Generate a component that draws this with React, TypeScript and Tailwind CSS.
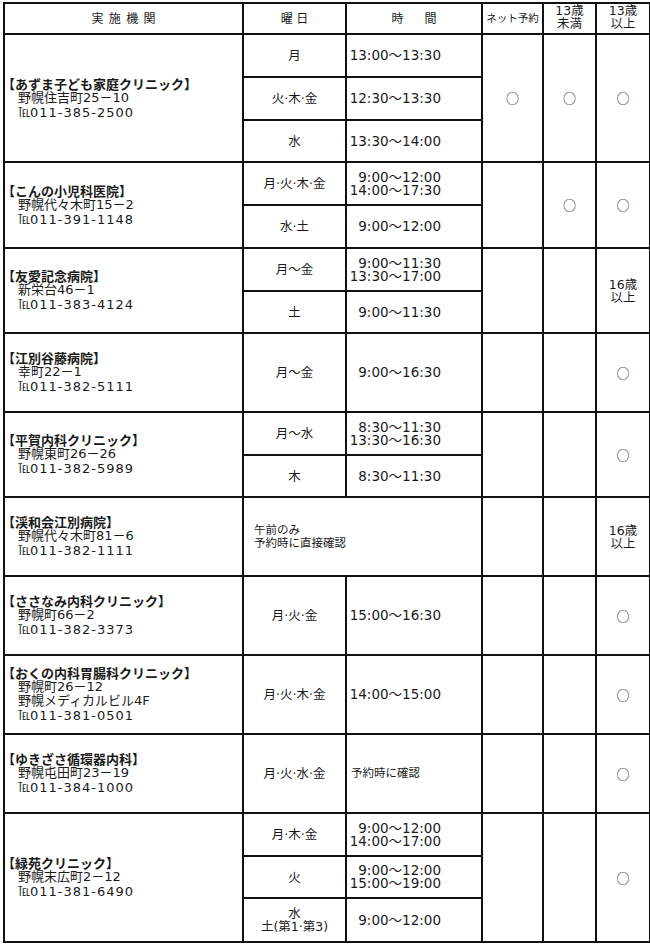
import { FC } from "react";

type Sub = {
  h: string;
  day?: string[];
  time?: string[];
  note?: string;
  span?: string[];
};

type Row = {
  name: string;
  addr: string[];
  tel: string;
  net?: boolean;
  u13?: boolean;
  o13?: "o" | "16";
  subs: Sub[];
};

const rows: Row[] = [
  {
    name: "【あずま子ども家庭クリニック】",
    addr: ["野幌住吉町25－10"],
    tel: "011-385-2500",
    net: true,
    u13: true,
    o13: "o",
    subs: [
      { h: "h-[43px]", day: ["月"], time: ["13:00～13:30"] },
      { h: "h-[43px]", day: ["火·木·金"], time: ["12:30～13:30"] },
      { h: "h-[42px]", day: ["水"], time: ["13:30～14:00"] },
    ],
  },
  {
    name: "【こんの小児科医院】",
    addr: ["野幌代々木町15－2"],
    tel: "011-391-1148",
    u13: true,
    o13: "o",
    subs: [
      { h: "h-[43px]", day: ["月·火·木·金"], time: ["9:00～12:00", "14:00～17:30"] },
      { h: "h-[43px]", day: ["水·土"], time: ["9:00～12:00"] },
    ],
  },
  {
    name: "【友愛記念病院】",
    addr: ["新栄台46－1"],
    tel: "011-383-4124",
    o13: "16",
    subs: [
      { h: "h-[43px]", day: ["月～金"], time: ["9:00～11:30", "13:30～17:00"] },
      { h: "h-[42px]", day: ["土"], time: ["9:00～11:30"] },
    ],
  },
  {
    name: "【江別谷藤病院】",
    addr: ["幸町22－1"],
    tel: "011-382-5111",
    o13: "o",
    subs: [{ h: "h-[79px]", day: ["月～金"], time: ["9:00～16:30"] }],
  },
  {
    name: "【平賀内科クリニック】",
    addr: ["野幌東町26－26"],
    tel: "011-382-5989",
    o13: "o",
    subs: [
      { h: "h-[43px]", day: ["月～水"], time: ["8:30～11:30", "13:30～16:30"] },
      { h: "h-[42px]", day: ["木"], time: ["8:30～11:30"] },
    ],
  },
  {
    name: "【渓和会江別病院】",
    addr: ["野幌代々木町81－6"],
    tel: "011-382-1111",
    o13: "16",
    subs: [{ h: "h-[79px]", span: ["午前のみ", "予約時に直接確認"] }],
  },
  {
    name: "【ささなみ内科クリニック】",
    addr: ["野幌町66－2"],
    tel: "011-382-3373",
    o13: "o",
    subs: [{ h: "h-[79px]", day: ["月·火·金"], time: ["15:00～16:30"] }],
  },
  {
    name: "【おくの内科胃腸科クリニック】",
    addr: ["野幌町26－12", "野幌メディカルビル4F"],
    tel: "011-381-0501",
    o13: "o",
    subs: [{ h: "h-[79px]", day: ["月·火·木·金"], time: ["14:00～15:00"] }],
  },
  {
    name: "【ゆきざさ循環器内科】",
    addr: ["野幌屯田町23－19"],
    tel: "011-384-1000",
    o13: "o",
    subs: [{ h: "h-[79px]", day: ["月·火·水·金"], note: "予約時に確認" }],
  },
  {
    name: "【緑苑クリニック】",
    addr: ["野幌末広町2－12"],
    tel: "011-381-6490",
    o13: "o",
    subs: [
      { h: "h-[43px]", day: ["月·木·金"], time: ["9:00～12:00", "14:00～17:00"] },
      { h: "h-[42px]", day: ["火"], time: ["9:00～12:00", "15:00～19:00"] },
      { h: "h-[44px]", day: ["水", "土(第1·第3)"], time: ["9:00～12:00"] },
    ],
  },
];

const cell = "border-2 border-[#111] p-0 align-middle";

const Circle: FC = () => (
  <span className="font-['Noto_Sans_CJK_JP'] text-[13px]">○</span>
);

const Institution: FC<{ r: Row }> = ({ r }) => (
  <div className="leading-[14px]">
    <div className="-ml-[3px] whitespace-nowrap font-['Noto_Sans_CJK_JP'] text-[13px] font-bold">
      {r.name}
    </div>
    {r.addr.map((a) => (
      <div key={a} className="whitespace-nowrap pl-[13px] text-[13px]">
        {a}
      </div>
    ))}
    <div className="whitespace-nowrap pl-[13px] text-[13px] tracking-[1px]">
      <span className="font-['Noto_Sans_CJK_JP'] text-[12px] tracking-normal">℡</span>
      {r.tel}
    </div>
  </div>
);

const App: FC = () => {
  return (
    <div className="h-[945px] w-[650px] bg-white font-['DejaVu_Sans','Noto_Sans_CJK_JP',sans-serif] text-[#1a1a1a]">
      <table className="ml-[3px] mt-[2px] w-[646px] table-fixed border-collapse">
        <colgroup>
          <col className="w-[239px]" />
          <col className="w-[103px]" />
          <col className="w-[136px]" />
          <col className="w-[61px]" />
          <col className="w-[53px]" />
          <col className="w-[54px]" />
        </colgroup>
        <thead>
          <tr className="h-[31px]">
            <th className={cell + " text-center text-[12px] font-normal"}>
              <span className="pl-[0.45em] tracking-[0.45em]">実施機関</span>
            </th>
            <th className={cell + " text-center text-[12px] font-normal"}>
              <span className="pl-[0.3em] tracking-[0.3em]">曜日</span>
            </th>
            <th className={cell + " text-center text-[12px] font-normal"}>
              <span>時</span>
              <span className="ml-[21px]">間</span>
            </th>
            <th className={cell + " whitespace-nowrap text-center text-[10.5px] font-normal"}>
              ネット予約
            </th>
            <th className={cell + " pb-[3px] text-center text-[12.5px] font-normal leading-[13px]"}>
              13歳
              <br />
              未満
            </th>
            <th className={cell + " pb-[3px] text-center text-[12.5px] font-normal leading-[13px]"}>
              13歳
              <br />
              以上
            </th>
          </tr>
        </thead>
        <tbody>
          {rows.map((r) =>
            r.subs.map((s, i) => (
              <tr key={r.name + i} className={s.h}>
                {i === 0 && (
                  <td rowSpan={r.subs.length} className={cell}>
                    <Institution r={r} />
                  </td>
                )}
                {s.span ? (
                  <td colSpan={2} className={cell}>
                    <div className="pl-[10px] text-[11.5px] leading-[13px]">
                      {s.span.map((l) => (
                        <div key={l}>{l}</div>
                      ))}
                    </div>
                  </td>
                ) : (
                  <>
                    <td className={cell + " text-center text-[12.5px] leading-[13px]"}>
                      {s.day?.map((d) => (
                        <div key={d} className="whitespace-nowrap">
                          {d}
                        </div>
                      ))}
                    </td>
                    <td className={cell}>
                      {s.note ? (
                        <div className="pl-[4px] text-[11.5px]">{s.note}</div>
                      ) : (
                        <div className="ml-[3px] flex w-[91px] flex-col items-end text-[13.5px] leading-[13px]">
                          {s.time?.map((t) => (
                            <div key={t} className="whitespace-nowrap">
                              {t}
                            </div>
                          ))}
                        </div>
                      )}
                    </td>
                  </>
                )}
                {i === 0 && (
                  <>
                    <td rowSpan={r.subs.length} className={cell + " text-center"}>
                      {r.net && <Circle />}
                    </td>
                    <td rowSpan={r.subs.length} className={cell + " text-center"}>
                      {r.u13 && <Circle />}
                    </td>
                    <td rowSpan={r.subs.length} className={cell + " text-center"}>
                      {r.o13 === "o" && <Circle />}
                      {r.o13 === "16" && (
                        <div className="text-[12.5px] leading-[13px]">
                          16歳
                          <br />
                          以上
                        </div>
                      )}
                    </td>
                  </>
                )}
              </tr>
            ))
          )}
        </tbody>
      </table>
    </div>
  );
};

export default App;
